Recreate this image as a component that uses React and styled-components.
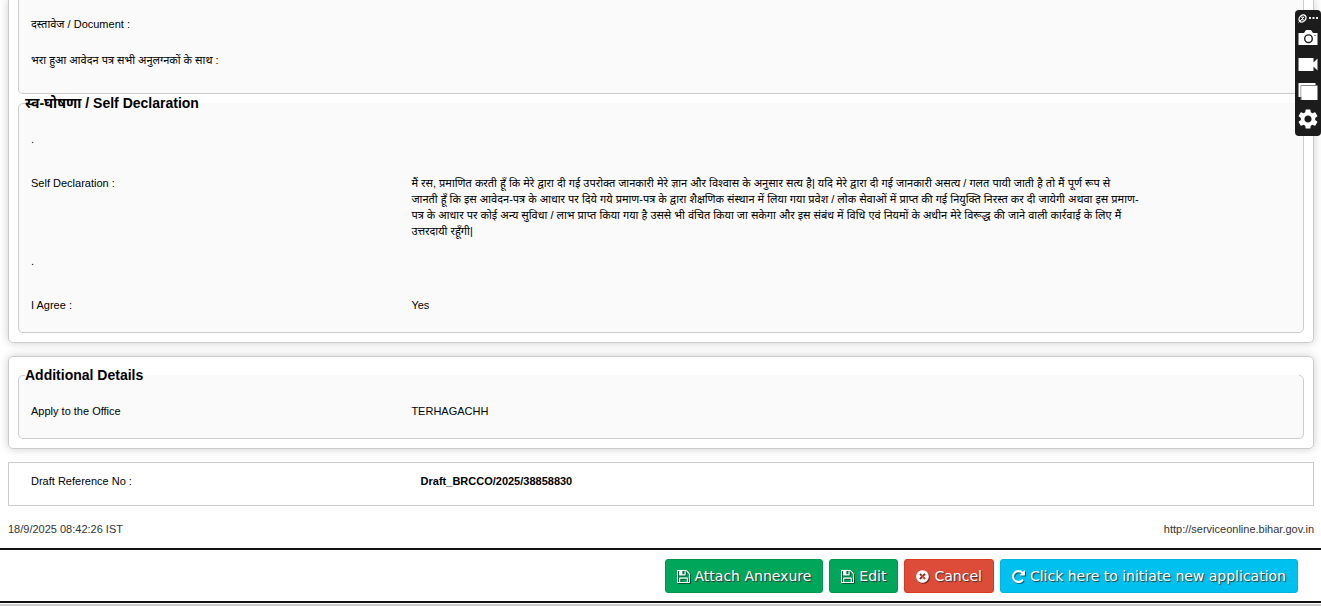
import styled, { createGlobalStyle } from "styled-components";
import { FaTimesCircle } from "react-icons/fa";
import { MdSettings } from "react-icons/md";

const SaveIcon = () => (
  <svg viewBox="0 128 1536 1536" aria-hidden="true">
    <path d="M384 1536h768v-384h-768v384zm896 0h128v-896q0-14-10-38.500t-20-34.500l-281-281q-10-10-34-20t-39-10v416q0 40-28 68t-68 28h-576q-40 0-68-28t-28-68v-416h-128v1280h128v-416q0-40 28-68t68-28h832q40 0 68 28t28 68v416zm-384-928v-320q0-13-9.500-22.500t-22.500-9.500h-192q-13 0-22.500 9.500t-9.500 22.500v320q0 13 9.500 22.500t22.500 9.500h192q13 0 22.500-9.500t9.500-22.500zm640 32v928q0 40-28 68t-68 28h-1344q-40 0-68-28t-28-68v-1344q0-40 28-68t68-28h928q40 0 88 20t76 48l280 280q28 28 48 76t20 88z" />
  </svg>
);

const RepeatIcon = () => (
  <svg viewBox="128 128 1536 1536" aria-hidden="true">
    <path d="M1664 256v448q0 26-19 45t-45 19h-448q-42 0-59-40-17-39 14-69l138-138q-148-137-349-137-104 0-198.500 40.500t-163.500 109.500-109.500 163.500-40.500 198.500 40.500 198.500 109.500 163.500 163.500 109.500 198.500 40.500q119 0 225-52t179-147q7-10 23-12 15 0 25 9l137 138q9 8 9.500 20.500t-7.500 22.500q-109 132-264 204.500t-327 72.500q-156 0-298-61t-245-164-164-245-61-298 61-298 164-245 245-164 298-61q147 0 284.500 55.500t244.500 156.500l130-129q29-31 70-14 39 17 39 59z" />
  </svg>
);

const App = () => {
  return (
    <>
      <GlobalStyle />
      <Page>
        <Card $continued>
          <Section $continued>
            <Row $space={6}>
              <span>दस्तावेज / Document :</span>
            </Row>
            <Row $space={6}>
              <span>भरा हुआ आवेदन पत्र सभी अनुलग्नकों के साथ :</span>
            </Row>
          </Section>
          <Section>
            <Legend>स्व-घोषणा / Self Declaration</Legend>
            <Row $space={14}>
              <span>.</span>
            </Row>
            <Row>
              <span>Self Declaration :</span>
              <span>
                मैं रस, प्रमाणित करती हूँ कि मेरे द्वारा दी गई उपरोक्त जानकारी मेरे ज्ञान और विश्वास के अनुसार सत्य है| यदि मेरे द्वारा दी गई जानकारी असत्य / गलत पायी जाती है तो मैं पूर्ण रूप से
                <br />
                जानती हूँ कि इस आवेदन-पत्र के आधार पर दिये गये प्रमाण-पत्र के द्वारा शैक्षणिक संस्थान में लिया गया प्रवेश / लोक सेवाओं में प्राप्त की गई नियुक्ति निरस्त कर दी जायेगी अथवा इस प्रमाण-
                <br />
                पत्र के आधार पर कोई अन्य सुविधा / लाभ प्राप्त किया गया है उससे भी वंचित किया जा सकेगा और इस संबंध में विधि एवं नियमों के अधीन मेरे विरूद्ध की जाने वाली कार्रवाई के लिए मैं
                <br />
                उत्तरदायी रहूँगी|
              </span>
            </Row>
            <Row $space={14}>
              <span>.</span>
            </Row>
            <Row>
              <span>I Agree :</span>
              <span>Yes</span>
            </Row>
          </Section>
        </Card>

        <Card>
          <Section>
            <Legend>Additional Details</Legend>
            <Row>
              <span>Apply to the Office</span>
              <span>TERHAGACHH</span>
            </Row>
          </Section>
        </Card>

        <ReferenceBox>
          <span>Draft Reference No :</span>
          <strong>Draft_BRCCO/2025/38858830</strong>
        </ReferenceBox>

        <PrintInfo>
          <span>18/9/2025 08:42:26 IST</span>
          <span>http://serviceonline.bihar.gov.in</span>
        </PrintInfo>
      </Page>

      <ActionBar>
        <ActionButton type="button" $color="#00a65a" $border="#009551">
          <SaveIcon />
          Attach Annexure
        </ActionButton>
        <ActionButton type="button" $color="#00a65a" $border="#009551">
          <SaveIcon />
          Edit
        </ActionButton>
        <ActionButton type="button" $color="#dd4b39" $border="#d73925">
          <FaTimesCircle aria-hidden="true" />
          Cancel
        </ActionButton>
        <ActionButton type="button" $color="#00c0ef" $border="#00b3e0">
          <RepeatIcon />
          Click here to initiate new application
        </ActionButton>
      </ActionBar>
      <BottomEdge />

      <CaptureBar aria-label="Capture tools">
        <TopTools>
          <ToolButton type="button" aria-label="Pin">
            <svg width="9" height="9" viewBox="0 0 9 9">
              <ellipse cx="4.500" cy="4.500" rx="3.900" ry="3" transform="rotate(-45 4.500 4.500)" fill="none" stroke="#fff" strokeWidth="1.400" />
              <path d="M0.500 8.500 6 3M3 3.200h3.200M3 5.800h3" fill="none" stroke="#fff" />
            </svg>
          </ToolButton>
          <ToolButton type="button" aria-label="More">
            <svg width="9" height="9" viewBox="0 0 9 9">
              <path d="M0 3h2v2H0zM3.500 3h2v2h-2zM7 3h2v2H7z" fill="#eee" />
            </svg>
          </ToolButton>
        </TopTools>
        <ToolButton type="button" aria-label="Screenshot">
          <svg width="20" height="20" viewBox="0 0 20 20">
            <path d="M0.500 4H6l2-3h5l2 3h4.500v12h-19z" fill="#fff" />
            <circle cx="10.500" cy="9.700" r="3.800" fill="none" stroke="#1c1c1c" strokeWidth="1.400" />
            <path d="M16.500 6h1v1h-1z" fill="#1c1c1c" />
          </svg>
        </ToolButton>
        <ToolButton type="button" aria-label="Record video">
          <svg width="20" height="20" viewBox="0 0 20 20">
            <path d="M0.500 3h15v4.500l4-4v12l-4-4V16h-15z" fill="#fff" />
          </svg>
        </ToolButton>
        <ToolButton type="button" aria-label="Gallery">
          <svg width="20" height="20" viewBox="0 0 20 20">
            <path d="M0.500 2h17v14h-17z" fill="#fff" />
            <path d="M3 19V4.500h16.500" fill="none" stroke="#888" />
            <path d="M3.500 5h16v14h-16z" fill="#fff" />
          </svg>
        </ToolButton>
        <ToolButton type="button" aria-label="Settings">
          <MdSettings size={24} color="#fff" />
        </ToolButton>
      </CaptureBar>
    </>
  );
};

export default App;

// Styled Components
const GlobalStyle = createGlobalStyle`
  * {
    box-sizing: border-box;
  }

  body {
    margin: 0;
    background: #fff;
    color: #000;
    font-family: "Liberation Sans", "Noto Sans", sans-serif;
    font-size: 11px;
    line-height: 16px;
  }
`;

const Page = styled.main`
  display: flex;
  flex-direction: column;
  gap: 13px;
  padding: 0 7px 11px 8px;
`;

const Card = styled.section`
  padding: ${({ $continued }) => ($continued ? "0 9px 9px" : "9px")};
  border: 1px solid #ccc;
  border-top-width: ${({ $continued }) => ($continued ? "0" : "1px")};
  border-radius: ${({ $continued }) => ($continued ? "0 0 5px 5px" : "5px")};
  box-shadow: 0 0 10px rgba(0, 0, 0, 0.2);
`;

const Section = styled.fieldset`
  min-width: 0;
  margin: 0;
  padding: ${({ $continued }) => ($continued ? "9px 4px 12px 12px" : "12px 4px 12px 12px")};
  border: 1px solid #ccc;
  border-top-width: ${({ $continued }) => ($continued ? "0" : "1px")};
  border-radius: ${({ $continued }) => ($continued ? "0 0 5px 5px" : "5px")};
  background: #fafafa;
`;

const Legend = styled.legend`
  width: calc(100% + 6px);
  margin-left: -6px;
  padding: 0;
  font-size: 14px;
  font-weight: bold;
  line-height: 18px;
`;

const Row = styled.div`
  display: grid;
  grid-template-columns: 30% 60%;
  padding: 7px 0;
  margin-bottom: ${({ $space = 0 }) => $space}px;
`;

const ReferenceBox = styled.div`
  display: grid;
  grid-template-columns: 30% 60%;
  padding: 10px 0 16px 22px;
  border: 1px solid #ccc;

  strong {
    padding-left: 5px;
  }
`;

const PrintInfo = styled.footer`
  display: flex;
  justify-content: space-between;
  padding-top: 2px;
  color: #333;
`;

const ActionBar = styled.div`
  display: flex;
  justify-content: flex-end;
  gap: 6px;
  padding: 9px 23px 8px;
  border-top: 2px solid #111;
  border-bottom: 2px solid #111;
`;

const ActionButton = styled.button`
  display: flex;
  align-items: center;
  gap: 5px;
  height: 34px;
  padding: 0 11px;
  border: 1px solid ${({ $border }) => $border};
  border-radius: 3px;
  background: ${({ $color }) => $color};
  color: #fff;
  font-family: "DejaVu Sans", Verdana, sans-serif;
  font-size: 14px;
  line-height: 20px;
  text-shadow: 1px 1px 1px #333;
  white-space: nowrap;
  cursor: pointer;

  svg {
    width: 13px;
    height: 13px;
    fill: currentColor;
    filter: drop-shadow(1px 1px 0 rgba(0, 0, 0, 0.5));
  }
`;

const BottomEdge = styled.div`
  height: 2px;
  margin-top: 1px;
  background: #ccc;
`;

const CaptureBar = styled.aside`
  position: fixed;
  top: 10px;
  right: 0;
  display: flex;
  flex-direction: column;
  align-items: center;
  gap: 6px;
  width: 26px;
  padding: 4px 0 5px;
  border-radius: 4px;
  background: #1c1c1c;
`;

const TopTools = styled.div`
  display: flex;
  gap: 2px;
`;

const ToolButton = styled.button`
  display: flex;
  padding: 0;
  border: 0;
  background: none;
  cursor: pointer;
`;
